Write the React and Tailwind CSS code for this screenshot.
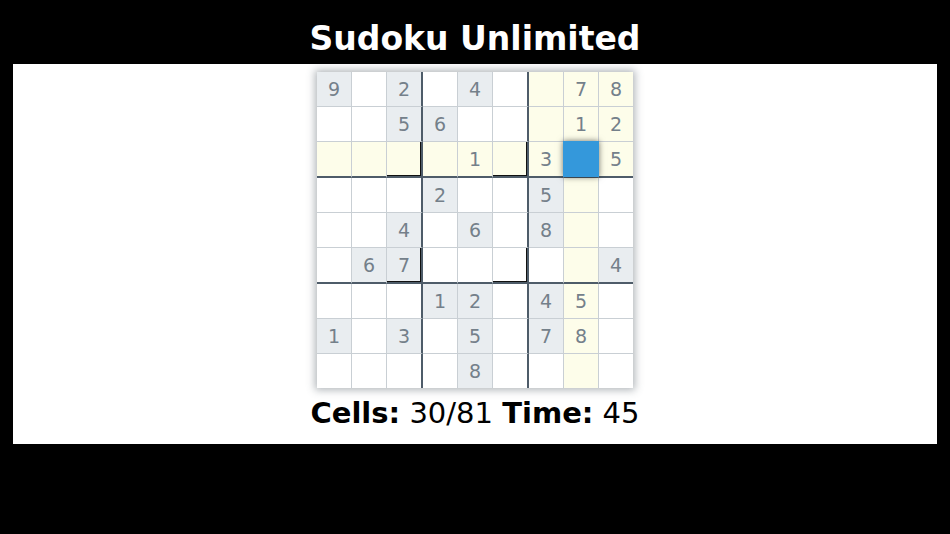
const GRID = [
  "9.2.4..78",
  "..56...12",
  "....1.3.5",
  "...2..5..",
  "..4.6.8..",
  ".67.....4",
  "...12.45.",
  "1.3.5.78.",
  "....8....",
];

const SEL = { r: 2, c: 7 };

function Cell({ r, c, v }) {
  const given = v !== ".";
  const highlight =
    r === SEL.r || c === SEL.c || (Math.floor(r / 3) === 0 && Math.floor(c / 3) === 2);
  const selected = r === SEL.r && c === SEL.c;

  const bg = highlight ? "bg-[#fdfdea]" : given ? "bg-[#e9edf0]" : "bg-white";

  let w = "w-[35px] border-r border-r-[#c9cfd4]";
  if (c === 2 || c === 5) w = "w-[36px] border-r-2 border-r-[#4e5c69]";
  if (c === 8) w = "w-[34px]";

  let h = "h-[35px] border-b border-b-[#c9cfd4]";
  if (r === 2 || r === 5) h = "h-[36px] border-b-2 border-b-[#4e5c69]";
  if (r === 8) h = "h-[34px]";

  const corner = (r === 2 || r === 5) && (c === 2 || c === 5);

  return (
    <div
      className={`${w} ${h} ${bg} relative flex items-center justify-center text-[19px] text-[#74808a] ${
        corner ? "shadow-[inset_-1px_-1px_0_#111]" : ""
      }`}
    >
      {given ? v : ""}
      {selected && (
        <div className="absolute -inset-px bg-[#3498db] shadow-[0_0_6px_rgba(0,0,0,0.55)] z-10" />
      )}
    </div>
  );
}

export default function App() {
  return (
    <div
      className="w-[950px] h-[534px] bg-black flex flex-col"
      style={{ fontFamily: '"DejaVu Sans", Verdana, sans-serif' }}
    >
      <div className="h-[64px] pt-[14px] text-center text-white font-bold text-[33px] leading-normal">
        Sudoku Unlimited
      </div>
      <div className="mx-[13px] h-[380px] bg-white flex flex-col items-center pt-[8px]">
        <div className="flex flex-col shadow-[0_0_8px_2px_rgba(80,90,100,0.45)]">
          {GRID.map((row, r) => (
            <div key={r} className="flex">
              {row.split("").map((v, c) => (
                <Cell key={c} r={r} c={c} v={v} />
              ))}
            </div>
          ))}
        </div>
        <div className="mt-[4px] text-[29px] leading-normal text-black">
          <span className="font-bold">Cells:</span> 30/81{" "}
          <span className="font-bold">Time:</span> 45
        </div>
      </div>
    </div>
  );
}
